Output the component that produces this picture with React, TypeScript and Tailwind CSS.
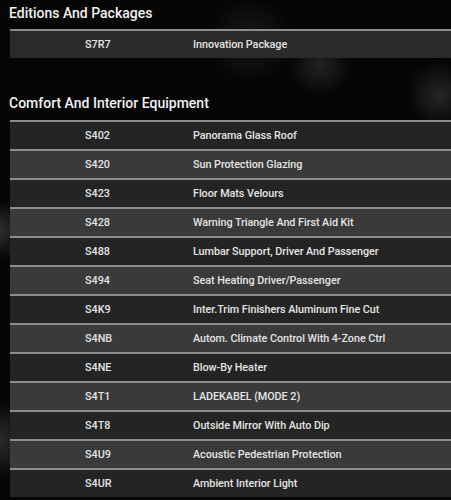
import React from "react";

interface EquipmentItem {
  code: string;
  label: string;
}

const editions: EquipmentItem[] = [{ code: "S7R7", label: "Innovation Package" }];

const comfort: EquipmentItem[] = [
  { code: "S402", label: "Panorama Glass Roof" },
  { code: "S420", label: "Sun Protection Glazing" },
  { code: "S423", label: "Floor Mats Velours" },
  { code: "S428", label: "Warning Triangle And First Aid Kit" },
  { code: "S488", label: "Lumbar Support, Driver And Passenger" },
  { code: "S494", label: "Seat Heating Driver/Passenger" },
  { code: "S4K9", label: "Inter.Trim Finishers Aluminum Fine Cut" },
  { code: "S4NB", label: "Autom. Climate Control With 4-Zone Ctrl" },
  { code: "S4NE", label: "Blow-By Heater" },
  { code: "S4T1", label: "LADEKABEL (MODE 2)" },
  { code: "S4T8", label: "Outside Mirror With Auto Dip" },
  { code: "S4U9", label: "Acoustic Pedestrian Protection" },
  { code: "S4UR", label: "Ambient Interior Light" },
];

function EquipmentRow({ item, light }: { item: EquipmentItem; light: boolean }) {
  return (
    <div
      className={
        light
          ? "flex h-[29px] items-center border-t-2 border-[#8d8d8d] bg-[#3a3a3a] pt-px"
          : "flex h-[29px] items-center border-t-2 border-[#8d8d8d] bg-[#242424] pt-px"
      }
    >
      <div className="w-[183px] shrink-0 pl-[75px] text-[10.8px] font-medium text-[#e4e4e4]">
        {item.code}
      </div>
      <div className="text-[10.8px] font-medium tracking-[-0.05px] text-[#e4e4e4] whitespace-nowrap">
        {item.label}
      </div>
    </div>
  );
}

export default function App() {
  return (
    <div className="h-[500px] w-[451px] overflow-hidden bg-[#050505] bg-[radial-gradient(circle_at_320px_65px,#222_0,transparent_32px),radial-gradient(circle_at_440px_95px,#262626_0,transparent_34px),radial-gradient(circle_at_250px_40px,#1a1a1a_0,transparent_44px),radial-gradient(circle_at_0px_230px,#2e2e2e_0,transparent_30px),radial-gradient(circle_at_0px_440px,#2a2a2a_0,transparent_40px)] font-['Roboto','Liberation_Sans',sans-serif]">
      <h2 className="h-[29px] pl-[9px] pt-[3px] text-[14px] leading-[20px] font-medium text-[#f2f2f2]">
        Editions And Packages
      </h2>
      <div className="ml-[10px]">
        {editions.map((item) => (
          <div
            key={item.code}
            className="flex h-[29px] items-center border-t-2 border-[#8d8d8d] bg-[#2a2a2a] pt-px"
          >
            <div className="w-[183px] shrink-0 pl-[75px] text-[10.8px] font-medium text-[#e4e4e4]">
              {item.code}
            </div>
            <div className="text-[10.8px] font-medium tracking-[-0.05px] text-[#e4e4e4]">
              {item.label}
            </div>
          </div>
        ))}
      </div>
      <h2 className="mt-[35px] h-[27px] pl-[9px] text-[14px] leading-[20px] font-medium text-[#f2f2f2]">
        Comfort And Interior Equipment
      </h2>
      <div className="ml-[10px]">
        {comfort.map((item, index) => (
          <EquipmentRow key={item.code} item={item} light={index % 2 === 1} />
        ))}
      </div>
    </div>
  );
}
